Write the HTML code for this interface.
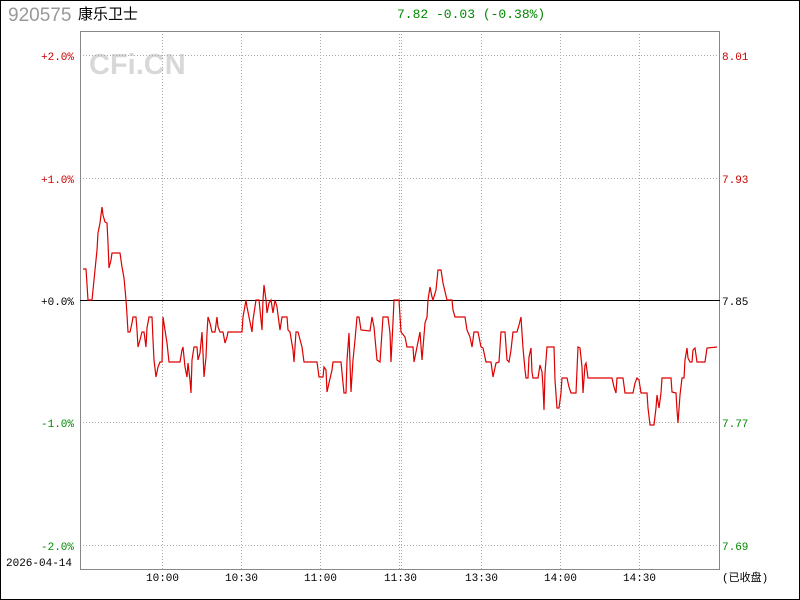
<!DOCTYPE html>
<html><head><meta charset="utf-8"><style>
html,body{margin:0;padding:0;background:#fff}
body{width:800px;height:600px;position:relative;overflow:hidden}
.t{position:absolute;font-family:"Liberation Mono",monospace;font-size:11px;white-space:nowrap;line-height:12px}
</style></head><body>
<div style="position:absolute;left:0;top:0;width:798px;height:598px;border:1px solid #000"></div>
<div style="position:absolute;left:8px;top:5px;font-family:'Liberation Sans',sans-serif;font-size:19px;color:#999;line-height:22px">920575</div>
<div style="position:absolute;left:78px;top:5px;font-family:'Liberation Sans','Noto Sans CJK SC',sans-serif;font-size:15px;color:#000;line-height:20px">康乐卫士</div>
<div class="t" style="left:397px;top:7px;font-size:13px;color:#080;line-height:16px">7.82 -0.03 (-0.38%)</div>
<div style="position:absolute;left:89px;top:49px;font-family:'Liberation Sans',sans-serif;font-weight:bold;font-size:29px;color:#d8d8d8;line-height:32px">CFi.CN</div>
<svg style="position:absolute;left:0;top:0" width="800" height="600">
<g stroke="#aaa" stroke-width="1" stroke-dasharray="1,2" shape-rendering="crispEdges">
<line x1="80" y1="55.5" x2="720" y2="55.5"/><line x1="80" y1="178.5" x2="720" y2="178.5"/>
<line x1="80" y1="422.5" x2="720" y2="422.5"/><line x1="80" y1="545.5" x2="720" y2="545.5"/>
<line x1="162.5" y1="31" x2="162.5" y2="569"/><line x1="241.5" y1="31" x2="241.5" y2="569"/>
<line x1="320.5" y1="31" x2="320.5" y2="569"/><line x1="399.5" y1="31" x2="399.5" y2="569"/>
<line x1="401.5" y1="31" x2="401.5" y2="569"/><line x1="481.5" y1="31" x2="481.5" y2="569"/>
<line x1="560.5" y1="31" x2="560.5" y2="569"/><line x1="639.5" y1="31" x2="639.5" y2="569"/>
</g>
<rect x="80.5" y="31.5" width="639" height="538" fill="none" stroke="#888" shape-rendering="crispEdges"/>
<line x1="80" y1="300.5" x2="720" y2="300.5" stroke="#000" shape-rendering="crispEdges"/>
<polyline fill="none" stroke="#d00" stroke-width="1.2" points="83,269 86,269 88,300 92,300 93,290 95,270 97,250 98,233 100,223 102,207 103,215 105,222 107,223 108,243 109,268 111,260 112,253 120,253 122,267 124,278 126,300 127,315 128,332 130,332 132,323 133,317 136,317 137,330 138,347 140,340 142,332 144,332 146,347 147,328 149,317 152,317 153,340 154,360 156,377 158,367 160,362 162,362 163,317 165,330 167,343 169,362 180,362 182,350 183,347 185,367 187,377 188,363 190,380 191,393 192,360 194,347 197,347 198,360 200,353 202,332 203,353 204,377 206,357 207,333 208,317 210,323 212,332 215,332 217,317 218,327 220,332 223,332 225,343 227,337 228,332 242,332 243,317 246,300 247,307 249,317 251,327 252,332 253,320 256,300 259,300 262,330 263,300 264,285 266,300 267,313 269,303 271,300 273,313 275,300 277,307 278,315 280,330 282,317 287,317 288,330 290,332 293,350 294,362 296,332 298,332 302,347 304,362 317,362 319,377 323,377 324,367 326,370 327,392 329,383 332,370 333,362 341,362 343,383 344,393 346,393 347,360 349,333 351,392 353,360 355,340 357,317 359,317 361,330 370,331 372,317 374,327 377,360 380,362 382,332 383,317 388,317 390,333 391,362 393,322 394,300 399,300 401,332 405,337 407,347 413,347 414,362 417,347 420,332 422,360 425,323 427,317 428,300 430,287 432,297 433,300 436,290 438,270 441,270 443,283 447,300 452,300 453,310 455,317 465,317 467,330 470,337 472,347 474,332 478,332 481,347 483,348 486,362 491,362 493,377 496,363 499,362 501,332 503,332 505,332 507,360 509,362 511,350 513,332 517,332 519,325 521,317 522,333 523,348 525,370 526,378 528,378 529,357 531,348 532,372 533,378 538,378 540,365 542,372 543,387 544,410 545,373 547,347 554,347 555,380 557,408 559,408 561,393 562,378 567,378 569,387 571,393 576,393 577,370 578,347 580,348 582,367 583,393 585,365 586,363 588,378 612,378 614,387 616,393 617,378 623,378 625,393 633,393 635,383 637,378 639,380 641,393 647,393 648,408 650,425 654,425 656,408 657,395 659,408 661,393 662,378 671,378 672,392 676,393 677,410 678,423 680,395 682,378 684,378 685,360 687,348 688,358 690,362 692,362 693,350 695,348 697,362 705,362 707,348 717,347"/>
</svg>
<div class="t" style="left:41px;top:52px;color:#c00">+2.0%</div>
<div class="t" style="left:41px;top:175px;color:#c00">+1.0%</div>
<div class="t" style="left:41px;top:297px;color:#000">+0.0%</div>
<div class="t" style="left:41px;top:419px;color:#080">-1.0%</div>
<div class="t" style="left:41px;top:542px;color:#080">-2.0%</div>
<div class="t" style="left:722px;top:52px;color:#c00">8.01</div>
<div class="t" style="left:722px;top:175px;color:#c00">7.93</div>
<div class="t" style="left:722px;top:297px;color:#000">7.85</div>
<div class="t" style="left:722px;top:419px;color:#080">7.77</div>
<div class="t" style="left:722px;top:542px;color:#080">7.69</div>
<div class="t" style="left:6px;top:558px;color:#000">2026-04-14</div>
<div class="t" style="left:146px;top:573px;color:#000">10:00</div>
<div class="t" style="left:225px;top:573px;color:#000">10:30</div>
<div class="t" style="left:304px;top:573px;color:#000">11:00</div>
<div class="t" style="left:384px;top:573px;color:#000">11:30</div>
<div class="t" style="left:465px;top:573px;color:#000">13:30</div>
<div class="t" style="left:544px;top:573px;color:#000">14:00</div>
<div class="t" style="left:623px;top:573px;color:#000">14:30</div>
<div class="t" style="left:722px;top:573px;color:#000;font-family:'Liberation Mono','Noto Sans CJK SC',monospace">(已收盘)</div>
</body></html>
